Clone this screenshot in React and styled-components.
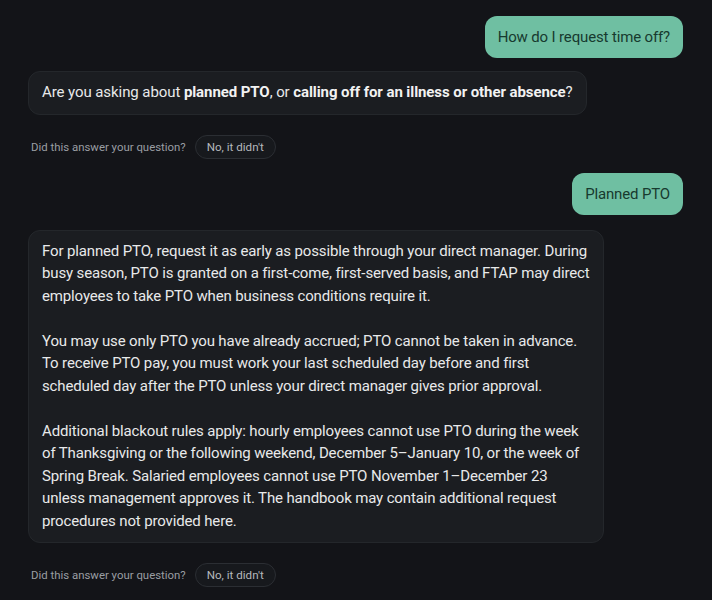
import styled, { createGlobalStyle } from "styled-components"

const Global = createGlobalStyle`
  html, body {
    margin: 0;
    background: #131418;
  }
  body {
    font-family: Roboto, "Noto Sans", sans-serif;
  }
`;

const Thread = styled.div`
  display: flex;
  flex-direction: column;
  padding: 16px 29px 16px 28px;
  min-height: 600px;
  box-sizing: border-box;
`;

const UserBubble = styled.div`
  align-self: flex-end;
  background: #6fbfa2;
  color: #173a2f;
  font-size: 15px;
  letter-spacing: -0.15px;
  line-height: 22px;
  padding: 10px 13px;
  border-radius: 12px;
  margin-bottom: ${p => p.$gap || 13}px;
`;

const BotBubble = styled.div`
  align-self: flex-start;
  background: #1b1d21;
  border: 1px solid #24272b;
  color: #e8e9ea;
  font-size: 15px;
  letter-spacing: ${p => p.$spacing ?? -0.14}px;
  line-height: 22.5px;
  padding: 9px 13px 10px;
  border-radius: 12px;
  white-space: nowrap;
  margin-bottom: 20px;

  b {
    font-weight: 700;
    color: #f2f2f2;
  }

  p {
    margin: 0;
  }

  p + p {
    margin-top: 22.5px;
  }
`;

const Feedback = styled.div`
  display: flex;
  align-items: center;
  gap: 9px;
  padding-left: 3px;
  margin-bottom: 14px;
`;

const Question = styled.span`
  font-size: 11.4px;
  color: #9a9ea3;
`;

const NoButton = styled.button`
  font-family: inherit;
  font-size: 11.6px;
  color: #b4b8bc;
  background: #17191d;
  border: 1px solid #2b2e33;
  border-radius: 12px;
  height: 24px;
  padding: 0 11px;
`;

const FeedbackRow = () => (
  <Feedback>
    <Question>Did this answer your question?</Question>
    <NoButton>No, it didn't</NoButton>
  </Feedback>
);

export default function App() {
  return (
    <>
      <Global />
      <Thread>
        <UserBubble>How do I request time off?</UserBubble>
        <BotBubble $spacing={-0.08}>
          Are you asking about <b>planned PTO</b>, or <b>calling off for an illness or other absence</b>?
        </BotBubble>
        <FeedbackRow />
        <UserBubble $gap={15}>Planned PTO</UserBubble>
        <BotBubble>
          <p>
            For planned PTO, request it as early as possible through your direct manager. During<br />
            busy season, PTO is granted on a first-come, first-served basis, and FTAP may direct<br />
            employees to take PTO when business conditions require it.
          </p>
          <p>
            You may use only PTO you have already accrued; PTO cannot be taken in advance.<br />
            To receive PTO pay, you must work your last scheduled day before and first<br />
            scheduled day after the PTO unless your direct manager gives prior approval.
          </p>
          <p>
            Additional blackout rules apply: hourly employees cannot use PTO during the week<br />
            of Thanksgiving or the following weekend, December 5–January 10, or the week of<br />
            Spring Break. Salaried employees cannot use PTO November 1–December 23<br />
            unless management approves it. The handbook may contain additional request<br />
            procedures not provided here.
          </p>
        </BotBubble>
        <FeedbackRow />
      </Thread>
    </>
  )
}
